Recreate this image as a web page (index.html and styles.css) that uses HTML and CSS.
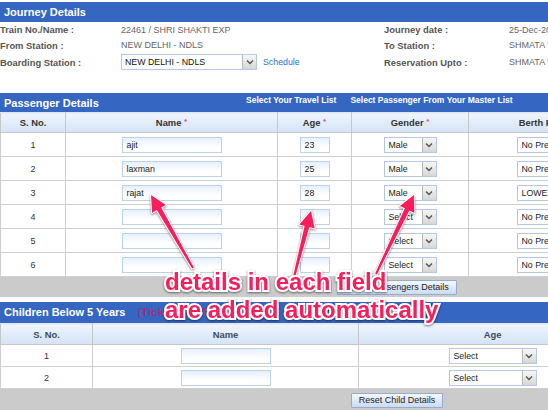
FILE: index.html
```html
<!DOCTYPE html>
<html>
<head>
<meta charset="utf-8">
<title>Passenger Details</title>
<link rel="stylesheet" href="styles.css">
</head>
<body>
<div class="page">
  <section class="journey">
    <h2 class="band">Journey Details</h2>
    <div class="jd-grid">
      <span class="lbl">Train No./Name :</span>
      <span class="val">22461 / SHRI SHAKTI EXP</span>
      <span class="lbl">Journey date :</span>
      <span class="val">25-Dec-2014</span>

      <span class="lbl">From Station :</span>
      <span class="val">NEW DELHI - NDLS</span>
      <span class="lbl">To Station :</span>
      <span class="val">SHMATA VAISHNO DEVI KATRA - SVDK</span>

      <span class="lbl">Boarding Station :</span>
      <span class="val boarding">
        <span class="sel sel-board"><span class="sel-text">NEW DELHI - NDLS</span><span class="drop"><svg width="8" height="6" viewBox="0 0 8 6"><path d="M1 1.5 L4 4.5 L7 1.5" fill="none" stroke="#555" stroke-width="1.4"/></svg></span></span>
        <a class="link">Schedule</a>
      </span>
      <span class="lbl">Reservation Upto :</span>
      <span class="val">SHMATA VAISHNO DEVI KATRA - SVDK</span>
    </div>
  </section>

  <section class="passengers">
    <div class="band band-pass">
      <span class="band-title">Passenger Details</span>
      <a class="band-link">Select Your Travel List</a>
      <a class="band-link">Select Passenger From Your Master List</a>
    </div>
    <table class="grid ptable">
      <colgroup>
        <col class="c-sno"><col class="c-name"><col class="c-age"><col class="c-gender"><col class="c-berth"><col class="c-extra">
      </colgroup>
      <thead>
        <tr><th>S. No.</th><th>Name <span class="req">*</span></th><th>Age <span class="req">*</span></th><th>Gender <span class="req">*</span></th><th>Berth Preference</th><th>Senior Citizen</th></tr>
      </thead>
      <tbody>
        <tr><td>1</td><td><span class="inp inp-name">ajit</span></td><td><span class="inp inp-age">23</span></td><td><span class="sel sel-gender"><span class="sel-text">Male</span><span class="drop"><svg width="8" height="6" viewBox="0 0 8 6"><path d="M1 1.5 L4 4.5 L7 1.5" fill="none" stroke="#555" stroke-width="1.4"/></svg></span></span></td><td><span class="sel sel-berth"><span class="sel-text">No Preference</span></span></td><td></td></tr>
        <tr><td>2</td><td><span class="inp inp-name">laxman</span></td><td><span class="inp inp-age">25</span></td><td><span class="sel sel-gender"><span class="sel-text">Male</span><span class="drop"><svg width="8" height="6" viewBox="0 0 8 6"><path d="M1 1.5 L4 4.5 L7 1.5" fill="none" stroke="#555" stroke-width="1.4"/></svg></span></span></td><td><span class="sel sel-berth"><span class="sel-text">No Preference</span></span></td><td></td></tr>
        <tr><td>3</td><td><span class="inp inp-name">rajat</span></td><td><span class="inp inp-age">28</span></td><td><span class="sel sel-gender"><span class="sel-text">Male</span><span class="drop"><svg width="8" height="6" viewBox="0 0 8 6"><path d="M1 1.5 L4 4.5 L7 1.5" fill="none" stroke="#555" stroke-width="1.4"/></svg></span></span></td><td><span class="sel sel-berth"><span class="sel-text">LOWER</span></span></td><td></td></tr>
        <tr><td>4</td><td><span class="inp inp-name"></span></td><td><span class="inp inp-age"></span></td><td><span class="sel sel-gender"><span class="sel-text">Select</span><span class="drop"><svg width="8" height="6" viewBox="0 0 8 6"><path d="M1 1.5 L4 4.5 L7 1.5" fill="none" stroke="#555" stroke-width="1.4"/></svg></span></span></td><td><span class="sel sel-berth"><span class="sel-text">No Preference</span></span></td><td></td></tr>
        <tr><td>5</td><td><span class="inp inp-name"></span></td><td><span class="inp inp-age"></span></td><td><span class="sel sel-gender"><span class="sel-text">Select</span><span class="drop"><svg width="8" height="6" viewBox="0 0 8 6"><path d="M1 1.5 L4 4.5 L7 1.5" fill="none" stroke="#555" stroke-width="1.4"/></svg></span></span></td><td><span class="sel sel-berth"><span class="sel-text">No Preference</span></span></td><td></td></tr>
        <tr><td>6</td><td><span class="inp inp-name"></span></td><td><span class="inp inp-age"></span></td><td><span class="sel sel-gender"><span class="sel-text">Select</span><span class="drop"><svg width="8" height="6" viewBox="0 0 8 6"><path d="M1 1.5 L4 4.5 L7 1.5" fill="none" stroke="#555" stroke-width="1.4"/></svg></span></span></td><td><span class="sel sel-berth"><span class="sel-text">No Preference</span></span></td><td></td></tr>
      </tbody>
    </table>
    <div class="btnbar"><button class="btn">Reset Passengers Details</button></div>
  </section>

  <section class="children">
    <div class="band band-child">
      <span class="band-title-sm">Children Below 5 Years</span>
      <span class="band-note">(Ticket Not To be Issued)</span>
    </div>
    <table class="grid ctable">
      <colgroup>
        <col class="cc-sno"><col class="cc-name"><col class="cc-age"><col class="cc-extra">
      </colgroup>
      <thead>
        <tr><th>S. No.</th><th>Name</th><th>Age</th><th></th></tr>
      </thead>
      <tbody>
        <tr><td>1</td><td><span class="inp inp-child"></span></td><td><span class="sel sel-child"><span class="sel-text">Select</span><span class="drop"><svg width="8" height="6" viewBox="0 0 8 6"><path d="M1 1.5 L4 4.5 L7 1.5" fill="none" stroke="#555" stroke-width="1.4"/></svg></span></span></td><td></td></tr>
        <tr><td>2</td><td><span class="inp inp-child"></span></td><td><span class="sel sel-child"><span class="sel-text">Select</span><span class="drop"><svg width="8" height="6" viewBox="0 0 8 6"><path d="M1 1.5 L4 4.5 L7 1.5" fill="none" stroke="#555" stroke-width="1.4"/></svg></span></span></td><td></td></tr>
      </tbody>
    </table>
    <div class="btnbar btnbar-child"><button class="btn">Reset Child Details</button></div>
  </section>
</div>

<div class="annot">
  <svg class="arrows" width="548" height="410" viewBox="0 0 548 410">
    <polygon points="193.9,267.5 161.2,207.6 165.9,204.9 151,195 152.1,212.9 156.8,210.1 192.1,268.5"/>
    <polygon points="295,277.3 309.4,227.1 314.7,228.5 311,211 299.3,224.5 304.6,225.9 293,276.8"/>
    <polygon points="376.9,274.4 409.4,210.5 414.3,212.9 414,195 399.9,205.9 404.8,208.3 375.1,273.6"/>
  </svg>
  <div class="annot-text">details in each field<br>are added automatically</div>
</div>
</body>
</html>
```

FILE: styles.css
```css
html, body {
  margin: 0;
  padding: 0;
  overflow: hidden;
  background: #fff;
}
body {
  width: 548px;
  height: 410px;
  position: relative;
  font-family: "Liberation Sans", Arial, sans-serif;
}
.page {
  width: 794px;
  padding-top: 2px;
}

/* blue section bands */
.band {
  margin: 0;
  background: #3566c2;
  color: #fff;
  font-weight: bold;
  font-size: 11px;
  height: 20px;
  line-height: 20px;
  padding-left: 4px;
}

/* journey details */
.jd-grid {
  display: grid;
  grid-template-columns: 121px 263px 125px 1fr;
  grid-template-rows: 15px 16px 18px;
  align-items: center;
}
.lbl {
  font-weight: bold;
  color: #555;
  font-size: 9.4px;
  white-space: nowrap;
}
.val {
  color: #666;
  font-size: 9px;
  white-space: nowrap;
}
.boarding {
  display: flex;
  align-items: center;
}
.link {
  color: #1f72d6;
  font-size: 8.8px;
  margin-left: 6px;
}

/* select boxes */
.sel {
  display: inline-flex;
  align-items: center;
  justify-content: space-between;
  box-sizing: border-box;
  height: 16px;
  border: 1px solid #b3c8e6;
  background: #fff;
  color: #222;
  font-size: 8.8px;
  padding-left: 4px;
  vertical-align: middle;
  overflow: hidden;
  white-space: nowrap;
}
.sel-board {
  width: 136px;
  color: #111;
  padding-left: 3px;
}
.drop {
  width: 14px;
  height: 14px;
  flex: none;
  box-sizing: border-box;
  border-left: 1px solid #b9b9b9;
  background: linear-gradient(#f7f7f7, #d6d6d6);
  display: flex;
  align-items: center;
  justify-content: center;
}
.sel-gender { width: 53px; }
.sel-berth { width: 80px; justify-content: flex-start; }
.sel-child { width: 88px; }

/* text inputs */
.inp {
  display: inline-block;
  box-sizing: border-box;
  height: 16px;
  line-height: 14px;
  border: 1px solid #bcd1ec;
  background: linear-gradient(#e7f0fc, #fff 70%);
  color: #222;
  font-size: 8.8px;
  padding-left: 4px;
  text-align: left;
  vertical-align: middle;
}
.inp-name { width: 100px; }
.inp-age { width: 30px; }
.inp-child { width: 90px; }

/* passenger band */
.passengers {
  margin-top: 22px;
}
.band-pass {
  display: grid;
  grid-template-columns: 228px auto auto;
  justify-content: start;
  column-gap: 14px;
  height: 19px;
}
.band-title {
  font-size: 11px;
}
.band-link {
  font-size: 8.5px;
  line-height: 11px;
  padding-top: 2px;
  align-self: start;
}

/* tables */
.grid {
  width: 794px;
  table-layout: fixed;
  border-collapse: collapse;
}
.grid th {
  height: 19px;
  padding: 0;
  background: linear-gradient(#eff5fd, #d4e3f6);
  color: #333;
  font-size: 9.4px;
  font-weight: bold;
  border: 1px solid #c6c6c6;
  border-top-color: #e2e8f0;
  white-space: nowrap;
  overflow: hidden;
}
.grid td {
  height: 23px;
  padding: 0;
  text-align: center;
  color: #333;
  font-size: 9px;
  border: 1px solid #cfcfcf;
  white-space: nowrap;
  overflow: hidden;
}
.req {
  color: #e4457a;
  font-size: 8px;
  vertical-align: top;
}
.c-sno { width: 65px; }
.c-name { width: 212px; }
.c-age { width: 74px; }
.c-gender { width: 117px; }
.c-berth { width: 176px; }
.c-extra { width: 150px; }

.btnbar {
  height: 20px;
  background: #cbcbcb;
  display: flex;
  align-items: center;
  justify-content: center;
}
.btn {
  height: 15px;
  padding: 0 7px;
  margin: 0;
  font-family: "Liberation Sans", Arial, sans-serif;
  font-size: 9px;
  color: #222;
  border: 1px solid #93acd0;
  border-radius: 1px;
  background: linear-gradient(#f3f8fe, #cbdbf1);
  line-height: 13px;
}

/* children */
.children {
  margin-top: 5px;
}
.band-child {
  height: 21px;
  line-height: 21px;
  display: flex;
  align-items: center;
}
.band-title-sm {
  font-size: 11px;
}
.band-note {
  color: #a3307f;
  font-size: 11.5px;
  margin-left: 12px;
}
.ctable th {
  height: 20px;
  color: #3d4a5e;
}
.ctable td {
  height: 21px;
}
.cc-sno { width: 92px; }
.cc-name { width: 266px; }
.cc-age { width: 268px; }
.cc-extra { width: 168px; }
.btnbar-child {
  height: 24px;
  align-items: flex-start;
  padding-top: 4px;
  box-sizing: border-box;
}

/* annotation overlay */
.annot {
  position: absolute;
  left: 0;
  top: 0;
  width: 548px;
  height: 410px;
  pointer-events: none;
}
.arrows {
  position: absolute;
  left: 0;
  top: 0;
  filter: drop-shadow(0 1px 1px rgba(0,0,0,0.45));
}
.arrows polygon {
  fill: #f81d5b;
  stroke: #fff;
  stroke-width: 2;
  stroke-linejoin: round;
  paint-order: stroke fill;
}
.annot-text {
  position: absolute;
  left: 165px;
  top: 268px;
  font-family: "Liberation Sans", Arial, sans-serif;
  font-weight: bold;
  font-size: 24px;
  line-height: 28px;
  color: #f81d5b;
  white-space: nowrap;
  -webkit-text-stroke: 4px #fff;
  paint-order: stroke fill;
  filter: drop-shadow(0 1px 1px rgba(0,0,0,0.5));
}
```
